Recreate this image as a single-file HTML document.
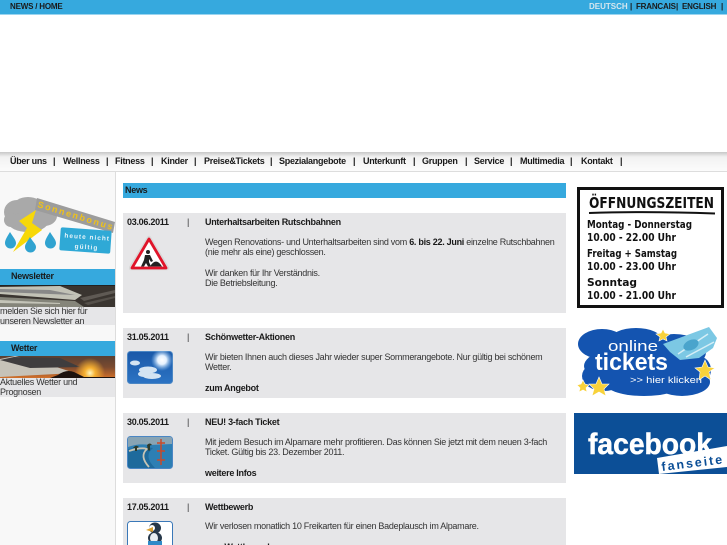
<!DOCTYPE html>
<html><head><meta charset="utf-8"><style>
html,body{margin:0;padding:0;background:#fff}
#p{position:relative;width:727px;height:545px;overflow:hidden;font-family:"Liberation Sans",sans-serif;font-size:9px;letter-spacing:-.28px;color:#333;background:#fff}
.a{position:absolute;white-space:nowrap;line-height:11px}
.b{font-weight:bold;color:#1a1a1a}
.t{font-size:8px;letter-spacing:-.2px}
.box{position:absolute;left:123px;width:443px;background:#e6e6e8}
.n{position:absolute;top:156px;font-weight:bold;color:#1a1a1a;font-size:9px;line-height:11px;white-space:nowrap}
svg{display:block;letter-spacing:0}
</style></head><body><div id="p">
<div style="position:absolute;left:0;top:0;width:727px;height:14px;background:#36a9de;border-bottom:1px solid #9ad4ef"></div>
<div class="a b t" style="left:10px;top:1px">NEWS / HOME</div>
<div class="a t" style="left:589px;top:1px;font-weight:bold;color:#d5e6ee;letter-spacing:0">DEUTSCH</div>
<div class="a b t" style="left:630px;top:1px">|</div>
<div class="a b t" style="left:636px;top:1px">FRANCAIS</div>
<div class="a b t" style="left:676px;top:1px">|</div>
<div class="a b t" style="left:682px;top:1px">ENGLISH</div>
<div class="a b t" style="left:721px;top:1px">|</div>

<div style="position:absolute;left:0;top:152px;width:727px;height:19px;background:linear-gradient(#c8c8c8,#f2f2f2 5px,#fbfbfb);border-bottom:1px solid #ddd"></div>
<div class="n" style="left:10px">Über uns</div><div class="n" style="left:53px">|</div>
<div class="n" style="left:63px">Wellness</div><div class="n" style="left:106px">|</div>
<div class="n" style="left:115px">Fitness</div><div class="n" style="left:151px">|</div>
<div class="n" style="left:161px">Kinder</div><div class="n" style="left:194px">|</div>
<div class="n" style="left:204px">Preise&amp;Tickets</div><div class="n" style="left:270px">|</div>
<div class="n" style="left:279px">Spezialangebote</div><div class="n" style="left:353px">|</div>
<div class="n" style="left:363px">Unterkunft</div><div class="n" style="left:413px">|</div>
<div class="n" style="left:422px">Gruppen</div><div class="n" style="left:465px">|</div>
<div class="n" style="left:474px">Service</div><div class="n" style="left:510px">|</div>
<div class="n" style="left:520px">Multimedia</div><div class="n" style="left:570px">|</div>
<div class="n" style="left:581px">Kontakt</div><div class="n" style="left:620px">|</div>

<div style="position:absolute;left:0;top:172px;width:115px;height:373px;background:#f8f8f8;border-right:1px solid #ddd"></div>

<!-- Sonnenbonus -->
<svg style="position:absolute;left:0;top:190px" width="116" height="78" viewBox="0 0 116 78">
<g fill="#a9a9a9"><ellipse cx="17" cy="22" rx="13" ry="12"/><ellipse cx="28" cy="17" rx="15" ry="10"/><ellipse cx="44" cy="26" rx="13" ry="10"/><ellipse cx="28" cy="32" rx="20" ry="10"/><ellipse cx="11" cy="30" rx="7" ry="7"/></g>
<polygon points="37,8 115,32 113,43 35,20" fill="#9c9c9c"/>
<polygon points="36,20 19,31 27,38 13,62 42,40 32,33" fill="#f7d808"/>
<g fill="#30a3d0"><path d="M10 42 C7 47 5 50 5 53 a5.500 5.500 0 0 0 11 0 C16 50 13 47 10 42Z"/><path d="M30 47 C27 52 25 54 25 57 a5.500 5.500 0 0 0 11 0 C36 54 33 52 30 47Z"/><path d="M50 42 C47 47 45 50 45 53 a5.500 5.500 0 0 0 11 0 C56 50 53 47 50 42Z"/></g>
<rect x="60" y="39" width="51" height="23" rx="2" fill="#2fa9d6" transform="rotate(4 85 50)"/>
<text x="87" y="49" text-anchor="middle" fill="#e6f4fa" font-family="Liberation Sans" font-size="6.500" font-weight="bold" letter-spacing="1" transform="rotate(4 85 50)">heute nicht</text>
<text x="87" y="59" text-anchor="middle" fill="#e6f4fa" font-family="Liberation Sans" font-size="6.500" font-weight="bold" letter-spacing="1" transform="rotate(4 85 50)">gültig</text>
<text x="37" y="17" fill="#eec11a" font-family="Liberation Sans" font-size="9" font-weight="bold" textLength="78" transform="rotate(17 37 17)">Sonnenbonus</text>
</svg>

<!-- Newsletter -->
<div style="position:absolute;left:0;top:269px;width:115px;height:16px;background:#36a9de"></div>
<div class="a b" style="left:11px;top:271px">Newsletter</div>
<svg style="position:absolute;left:0;top:285px" width="115" height="22" viewBox="0 0 115 22">
<rect width="115" height="22" fill="#3a3530"/>
<polygon points="0,2 60,1 82,10 75,15 0,9" fill="#c2c2b6"/>
<polygon points="0,4 50,5 75,10 0,7" fill="#888"/>
<polygon points="0,12 75,16 84,22 0,22" fill="#85857a"/>
<polygon points="0,15 60,18 60,19 0,18" fill="#c4c4b8"/>
<polygon points="80,13 115,5 115,8 84,16" fill="#5f5a54"/>
<polygon points="84,18 115,11 115,13 88,20" fill="#55504a"/>
<rect width="115" height="1" fill="#222"/>
</svg>
<div style="position:absolute;left:0;top:307px;width:115px;height:18px;background:#e6e6e8"></div>
<div class="a" style="left:0;top:307px;line-height:9.500px">melden Sie sich hier für<br>unseren Newsletter an</div>

<!-- Wetter -->
<div style="position:absolute;left:0;top:341px;width:115px;height:15px;background:#36a9de"></div>
<div class="a b" style="left:11px;top:343px">Wetter</div>
<svg style="position:absolute;left:0;top:356px" width="115" height="22" viewBox="0 0 115 22">
<defs><linearGradient id="w" x1="0" y1="0" x2="0" y2="1"><stop offset="0" stop-color="#5a4032"/><stop offset=".5" stop-color="#7a4a30"/><stop offset="1" stop-color="#d2702a"/></linearGradient>
<radialGradient id="s"><stop offset="0" stop-color="#fff6c0"/><stop offset=".35" stop-color="#f6b030"/><stop offset="1" stop-color="#f6b030" stop-opacity="0"/></radialGradient></defs>
<rect width="115" height="22" fill="url(#w)"/>
<polygon points="0,3 15,0 50,9 75,17 0,21" fill="#c6c2b8"/>
<polygon points="0,4 14,1 60,2 80,11 30,12" fill="#3f3d3e"/>
<circle cx="90" cy="17" r="15" fill="url(#s)"/>
<path d="M50 22 L58 19 Q66 13 74 16 L84 21 L115 21 V22Z" fill="#1c120e"/>
</svg>
<div style="position:absolute;left:0;top:378px;width:115px;height:19px;background:#e6e6e8"></div>
<div class="a" style="left:0;top:378px;line-height:9.500px">Aktuelles Wetter und<br>Prognosen</div>

<!-- News head -->
<div style="position:absolute;left:123px;top:183px;width:443px;height:15px;background:#36a9de"></div>
<div class="a b" style="left:125px;top:185px">News</div>

<!-- Cards -->
<div class="box" style="top:213px;height:100px"></div>
<div class="a b" style="left:127px;top:217px">03.06.2011</div>
<div class="a" style="left:187px;top:217px">|</div>
<div class="a b" style="left:205px;top:217px">Unterhaltsarbeiten Rutschbahnen</div>
<div class="a" style="left:205px;top:237px;line-height:10.300px">Wegen Renovations- und Unterhaltsarbeiten sind vom <b style="color:#1a1a1a">6. bis 22. Juni</b> einzelne Rutschbahnen<br>(nie mehr als eine) geschlossen.<br><br>Wir danken für Ihr Verständnis.<br>Die Betriebsleitung.</div>
<svg style="position:absolute;left:129px;top:235px" width="41" height="37" viewBox="0 0 41 37">
<polygon points="20,3 38,33 2,33" fill="#fff" stroke="#d9d9d9" stroke-width="4.500" stroke-linejoin="round"/>
<polygon points="20,4 37,33 3,33" fill="#fff" stroke="#e0142a" stroke-width="2.800" stroke-linejoin="round"/>
<circle cx="19" cy="17" r="2" fill="#222"/>
<path d="M16 20 L21 20 L24 26 L22 27 L20 24 L20 27 L22 31.500 L19 31.500 L17 28 L15 31.500 L12 31.500 L15 25Z" fill="#222"/>
<path d="M21 31.500q3-5 6-5t6 5Z" fill="#222"/>
</svg>

<div class="box" style="top:328px;height:70px"></div>
<div class="a b" style="left:127px;top:332px">31.05.2011</div>
<div class="a" style="left:187px;top:332px">|</div>
<div class="a b" style="left:205px;top:332px">Schönwetter-Aktionen</div>
<div class="a" style="left:205px;top:352px;line-height:10.300px">Wir bieten Ihnen auch dieses Jahr wieder super Sommerangebote. Nur gültig bei schönem<br>Wetter.</div>
<div class="a b" style="left:205px;top:383px">zum Angebot</div>
<svg style="position:absolute;left:127px;top:351px" width="46" height="33" viewBox="0 0 46 33">
<defs><linearGradient id="sk" x1="0" y1="0" x2="0" y2="1"><stop offset="0" stop-color="#1a58a8"/><stop offset="1" stop-color="#2c74c4"/></linearGradient><radialGradient id="su"><stop offset="0" stop-color="#fff"/><stop offset=".4" stop-color="#e6f2ff"/><stop offset="1" stop-color="#8cc0f0" stop-opacity="0"/></radialGradient></defs>
<rect x=".5" y=".5" width="45" height="32" rx="3" fill="url(#sk)" stroke="#4a86c4"/>
<circle cx="35" cy="9" r="11" fill="url(#su)"/>
<g fill="#d4e4f2"><ellipse cx="21" cy="19" rx="9" ry="3.500"/><ellipse cx="25" cy="25" rx="9" ry="3"/><ellipse cx="8" cy="12" rx="5" ry="2.500"/><ellipse cx="17" cy="23" rx="6" ry="3"/></g>
</svg>

<div class="box" style="top:413px;height:70px"></div>
<div class="a b" style="left:127px;top:417px">30.05.2011</div>
<div class="a" style="left:187px;top:417px">|</div>
<div class="a b" style="left:205px;top:417px">NEU! 3-fach Ticket</div>
<div class="a" style="left:205px;top:437px;line-height:10.300px">Mit jedem Besuch im Alpamare mehr profitieren. Das können Sie jetzt mit dem neuen 3-fach<br>Ticket. Gültig bis 23. Dezember 2011.</div>
<div class="a b" style="left:205px;top:468px">weitere Infos</div>
<svg style="position:absolute;left:127px;top:436px" width="46" height="33" viewBox="0 0 46 33">
<rect x=".5" y=".5" width="45" height="32" rx="3" fill="#2d7fb4" stroke="#4a86c4"/>
<path d="M1 11 Q12 7 22 9 L45 8 V3 Q45 1 43 1 H3 Q1 1 1 3 Z" fill="#88a4b4"/>
<path d="M1 13 Q18 10 26 12 Q16 20 28 32 H4 Q1 32 1 30Z" fill="#1e6a9c"/>
<path d="M2 15 Q14 11 20 13 Q12 20 22 31" fill="none" stroke="#c8c4b4" stroke-width="1.800"/>
<path d="M6 12 q3-4 6-1 l-2 1v3h-2v-3Z M20 9 q3-3 5 0l-2 .5v5h-2Z" fill="#2e3a2a"/>
<path d="M34 3 v26 M30 7 h8 M30 15 h8 M30 24 h8" stroke="#c84a2a" stroke-width="1.500" fill="none"/>
</svg>

<div class="box" style="top:498px;height:47px"></div>
<div class="a b" style="left:127px;top:502px">17.05.2011</div>
<div class="a" style="left:187px;top:502px">|</div>
<div class="a b" style="left:205px;top:502px">Wettbewerb</div>
<div class="a" style="left:205px;top:521px;line-height:10.300px">Wir verlosen monatlich 10 Freikarten für einen Badeplausch im Alpamare.</div>
<div class="a b" style="left:205px;top:542px">zum Wettbewerb</div>
<svg style="position:absolute;left:127px;top:521px" width="46" height="24" viewBox="0 0 46 24">
<rect x=".5" y=".5" width="45" height="33" rx="3" fill="#fff" stroke="#3a78b8"/>
<ellipse cx="28" cy="7" rx="6" ry="5.500" fill="#27384a"/>
<ellipse cx="25" cy="7" rx="3" ry="3" fill="#fff"/>
<polygon points="19,9 26,6 26,11" fill="#d8a030"/>
<ellipse cx="28" cy="17" rx="7" ry="6" fill="#27384a"/>
<ellipse cx="27" cy="17" rx="4" ry="5" fill="#e8eef2"/>
<rect x="21" y="20" width="14" height="4" fill="#2f8ac8"/>
</svg>

<!-- Öffnungszeiten -->
<svg style="position:absolute;left:577px;top:186px" width="148" height="122" viewBox="0 0 148 122">
<rect x="1.500" y="2.500" width="144" height="118" fill="#fff" stroke="#111" stroke-width="3"/>
<g font-family="DejaVu Sans" font-weight="bold" fill="#111">
<text x="12" y="22" font-size="15" textLength="125" lengthAdjust="spacingAndGlyphs">ÖFFNUNGSZEITEN</text>
<text x="10" y="42" font-size="11" textLength="105" lengthAdjust="spacingAndGlyphs">Montag - Donnerstag</text>
<text x="10" y="55" font-size="11" textLength="89" lengthAdjust="spacingAndGlyphs">10.00 - 22.00 Uhr</text>
<text x="10" y="71" font-size="11" textLength="90" lengthAdjust="spacingAndGlyphs">Freitag + Samstag</text>
<text x="10" y="84" font-size="11" textLength="89" lengthAdjust="spacingAndGlyphs">10.00 - 23.00 Uhr</text>
<text x="10" y="100" font-size="11" textLength="50" lengthAdjust="spacingAndGlyphs">Sonntag</text>
<text x="10" y="113" font-size="11" textLength="89" lengthAdjust="spacingAndGlyphs">10.00 - 21.00 Uhr</text>
</g>
<path d="M12 27 Q70 25 138 27.500" stroke="#111" stroke-width="2" fill="none"/>
</svg>

<!-- Tickets -->
<svg style="position:absolute;left:574px;top:324px" width="150" height="78" viewBox="0 0 150 78">
<g fill="#fff" stroke="#fff" stroke-width="3">
<ellipse cx="28" cy="20" rx="24" ry="15"/><ellipse cx="62" cy="16" rx="26" ry="12"/><ellipse cx="100" cy="28" rx="32" ry="18"/><ellipse cx="72" cy="42" rx="62" ry="22"/><ellipse cx="30" cy="52" rx="22" ry="15"/><ellipse cx="70" cy="60" rx="38" ry="12"/><ellipse cx="108" cy="58" rx="28" ry="14"/><ellipse cx="124" cy="46" rx="13" ry="14"/>
</g>
<g fill="#1454b0">
<ellipse cx="28" cy="20" rx="24" ry="15"/><ellipse cx="62" cy="16" rx="26" ry="12"/><ellipse cx="100" cy="28" rx="32" ry="18"/><ellipse cx="72" cy="42" rx="62" ry="22"/><ellipse cx="30" cy="52" rx="22" ry="15"/><ellipse cx="70" cy="60" rx="38" ry="12"/><ellipse cx="108" cy="58" rx="28" ry="14"/><ellipse cx="124" cy="46" rx="13" ry="14"/>
</g>
<path d="M89 20 L135 3 L143 14 L139 24 L125 34 L106 36 L96 28Z" fill="#7cc8e4"/>
<path d="M104 30 L134 10 M112 33 L140 18" stroke="#d6eef6" stroke-width="1.500"/>
<ellipse cx="117" cy="21" rx="8" ry="5" fill="#4aa4cc" transform="rotate(-25 117 21)"/>
<text x="34" y="27" fill="#fff" font-family="Liberation Sans" font-size="15" textLength="50" lengthAdjust="spacingAndGlyphs">online</text>
<text x="21" y="46" fill="#fff" font-family="Liberation Sans" font-size="24" font-weight="bold" textLength="73" lengthAdjust="spacingAndGlyphs">tickets</text>
<text x="56" y="59" fill="#fff" font-family="Liberation Sans" font-size="9.500" textLength="72" lengthAdjust="spacingAndGlyphs">&gt;&gt; hier klicken</text>
<g fill="#f8d23a" stroke="#fff" stroke-width=".6"><polygon points="131,36 134,43 141,44 135,48 137,56 131,52 125,56 126,48 121,44 128,43"/><polygon points="25,53 28,60 35,60 30,65 32,72 25,68 18,72 20,65 15,60 22,60"/><polygon points="9,56 11,60 15,61 12,64 13,68 9,66 5,68 6,64 3,61 7,60"/><polygon points="89,5 91,9 96,10 92,13 93,17 89,15 85,17 86,13 82,10 87,9"/></g>
</svg>

<!-- Facebook -->
<svg style="position:absolute;left:574px;top:413px" width="153" height="61" viewBox="0 0 153 61">
<rect width="153" height="61" fill="#0c4f97"/>
<text x="14" y="41" fill="#fff" stroke="#fff" stroke-width=".5" font-family="Liberation Sans" font-weight="bold" font-size="30" textLength="124" lengthAdjust="spacingAndGlyphs">facebook</text>
<polygon points="83,45 153,33 153,54 85,61" fill="#fff"/>
<text x="88" y="58" fill="#0c4f97" font-family="Liberation Sans" font-weight="bold" font-size="12.500" textLength="61" transform="rotate(-7 88 58)">fanseite</text>
</svg>
</div></body></html>
